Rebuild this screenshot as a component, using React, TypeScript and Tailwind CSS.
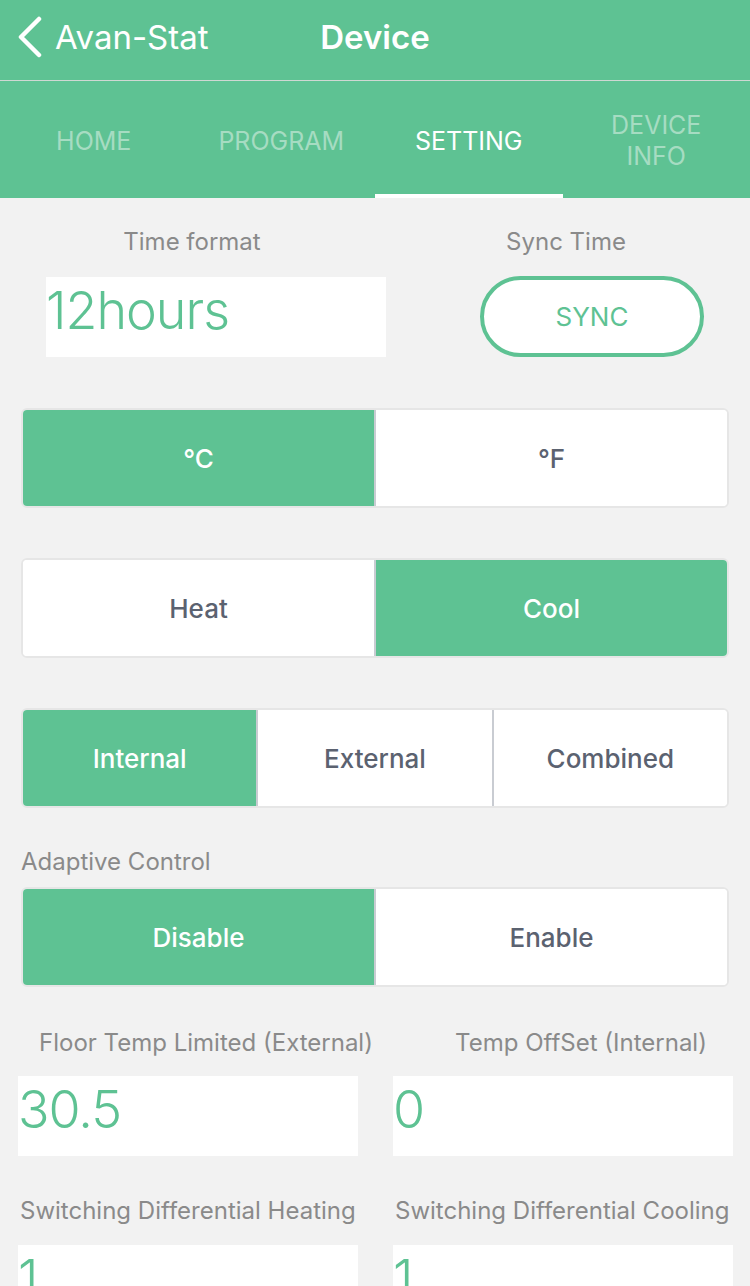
import React, { useState } from 'react';

const font = { fontFamily: 'Inter, "Noto Sans", sans-serif' };

const Segmented: React.FC<{ options: string[]; active: number; onChange: (i: number) => void }> = ({
  options,
  active,
  onChange,
}) => (
  <div className="mx-[21px] flex h-[100px] overflow-hidden rounded-[6px] border-2 border-[#e6e6e6] bg-white">
    {options.map((opt, i) => (
      <button
        key={opt}
        onClick={() => onChange(i)}
        className={`flex flex-1 items-center justify-center text-[26px] font-medium ${
          i > 0 ? 'border-l-2 border-[#c9ccd2]' : ''
        } ${i === active ? 'bg-[#5ec293] text-white' : 'bg-white text-[#5b6270]'}`}
      >
        {opt}
      </button>
    ))}
  </div>
);

const ValueBox: React.FC<{ value: string; className?: string }> = ({ value, className = '' }) => (
  <div className={`flex h-[80px] items-center bg-white pb-[12px] ${className}`}>
    <span className="text-[52px] font-light leading-none tracking-[-1px] text-[#5ec293]">{value}</span>
  </div>
);

export default function App() {
  const [tab, setTab] = useState(2);
  const [unit, setUnit] = useState(0);
  const [mode, setMode] = useState(1);
  const [sensor, setSensor] = useState(0);
  const [adaptive, setAdaptive] = useState(0);

  const tabs = ['HOME', 'PROGRAM', 'SETTING', 'DEVICE INFO'];

  return (
    <div className="h-[1286px] overflow-hidden bg-[#f2f2f2]" style={font}>
      {/* nav bar */}
      <div className="relative flex h-[80px] items-center bg-[#5ec293] pb-[6px] text-white">
        <div className="flex items-center pl-[17px]">
          <svg width="26" height="42" viewBox="0 0 26 42" fill="none">
            <path d="M22 3 L4 21 L22 39" stroke="white" strokeWidth="4.5" strokeLinecap="round" strokeLinejoin="round" />
          </svg>
          <span className="ml-[12px] text-[33px] leading-none">Avan-Stat</span>
        </div>
        <span className="absolute left-1/2 -translate-x-1/2 text-[33px] font-semibold leading-none">Device</span>
      </div>
      <div className="h-px bg-[#cfd8d3]" />

      {/* tabs */}
      <div className="flex h-[117px] bg-[#5ec293]">
        {tabs.map((t, i) => (
          <button
            key={t}
            onClick={() => setTab(i)}
            className={`relative flex flex-1 items-center justify-center px-4 pt-[3px] text-center text-[25px] leading-[31px] ${
              tab === i ? 'text-white' : 'text-[#a6dcc2]'
            }`}
          >
            {t}
            {tab === i && <span className="absolute bottom-0 left-0 right-0 h-[4px] bg-white" />}
          </button>
        ))}
      </div>

      {/* time */}
      <div className="flex pt-[30px] text-[24px] leading-[28px] text-[#8a8a8a]">
        <div className="w-[384px] text-center">Time format</div>
        <div className="w-[364px] text-center">Sync Time</div>
      </div>
      <div className="mt-[20px] flex items-center">
        <ValueBox value="12hours" className="ml-[46px] w-[340px]" />
        <button className="ml-[94px] flex h-[81px] w-[224px] items-center justify-center rounded-full border-[4px] border-[#5ec293] bg-white text-[26px] text-[#5ec293]">
          SYNC
        </button>
      </div>

      <div className="mt-[51px]">
        <Segmented options={['°C', '°F']} active={unit} onChange={setUnit} />
      </div>
      <div className="mt-[50px]">
        <Segmented options={['Heat', 'Cool']} active={mode} onChange={setMode} />
      </div>
      <div className="mt-[50px]">
        <Segmented options={['Internal', 'External', 'Combined']} active={sensor} onChange={setSensor} />
      </div>

      <div className="ml-[21px] mt-[40px] text-[24px] leading-[28px] text-[#8a8a8a]">Adaptive Control</div>
      <div className="mt-[11px]">
        <Segmented options={['Disable', 'Enable']} active={adaptive} onChange={setAdaptive} />
      </div>

      {/* numeric settings */}
      <div className="mt-[42px] flex text-[24px] leading-[28px] text-[#8a8a8a]">
        <div className="w-[412px] whitespace-nowrap text-center">Floor Temp Limited (External)</div>
        <div className="w-[338px] whitespace-nowrap text-center">Temp OffSet (Internal)</div>
      </div>
      <div className="mt-[19px] flex gap-[35px] pl-[18px]">
        <ValueBox value="30.5" className="w-[340px]" />
        <ValueBox value="0" className="w-[340px]" />
      </div>

      <div className="mt-[41px] flex text-[24px] leading-[28px] text-[#8a8a8a]">
        <div className="w-[375px] whitespace-nowrap pl-[20px]">Switching Differential Heating</div>
        <div className="w-[375px] whitespace-nowrap pl-[20px]">Switching Differential Cooling</div>
      </div>
      <div className="mt-[20px] flex gap-[35px] pl-[18px]">
        <ValueBox value="1" className="w-[340px]" />
        <ValueBox value="1" className="w-[340px]" />
      </div>
    </div>
  );
}
